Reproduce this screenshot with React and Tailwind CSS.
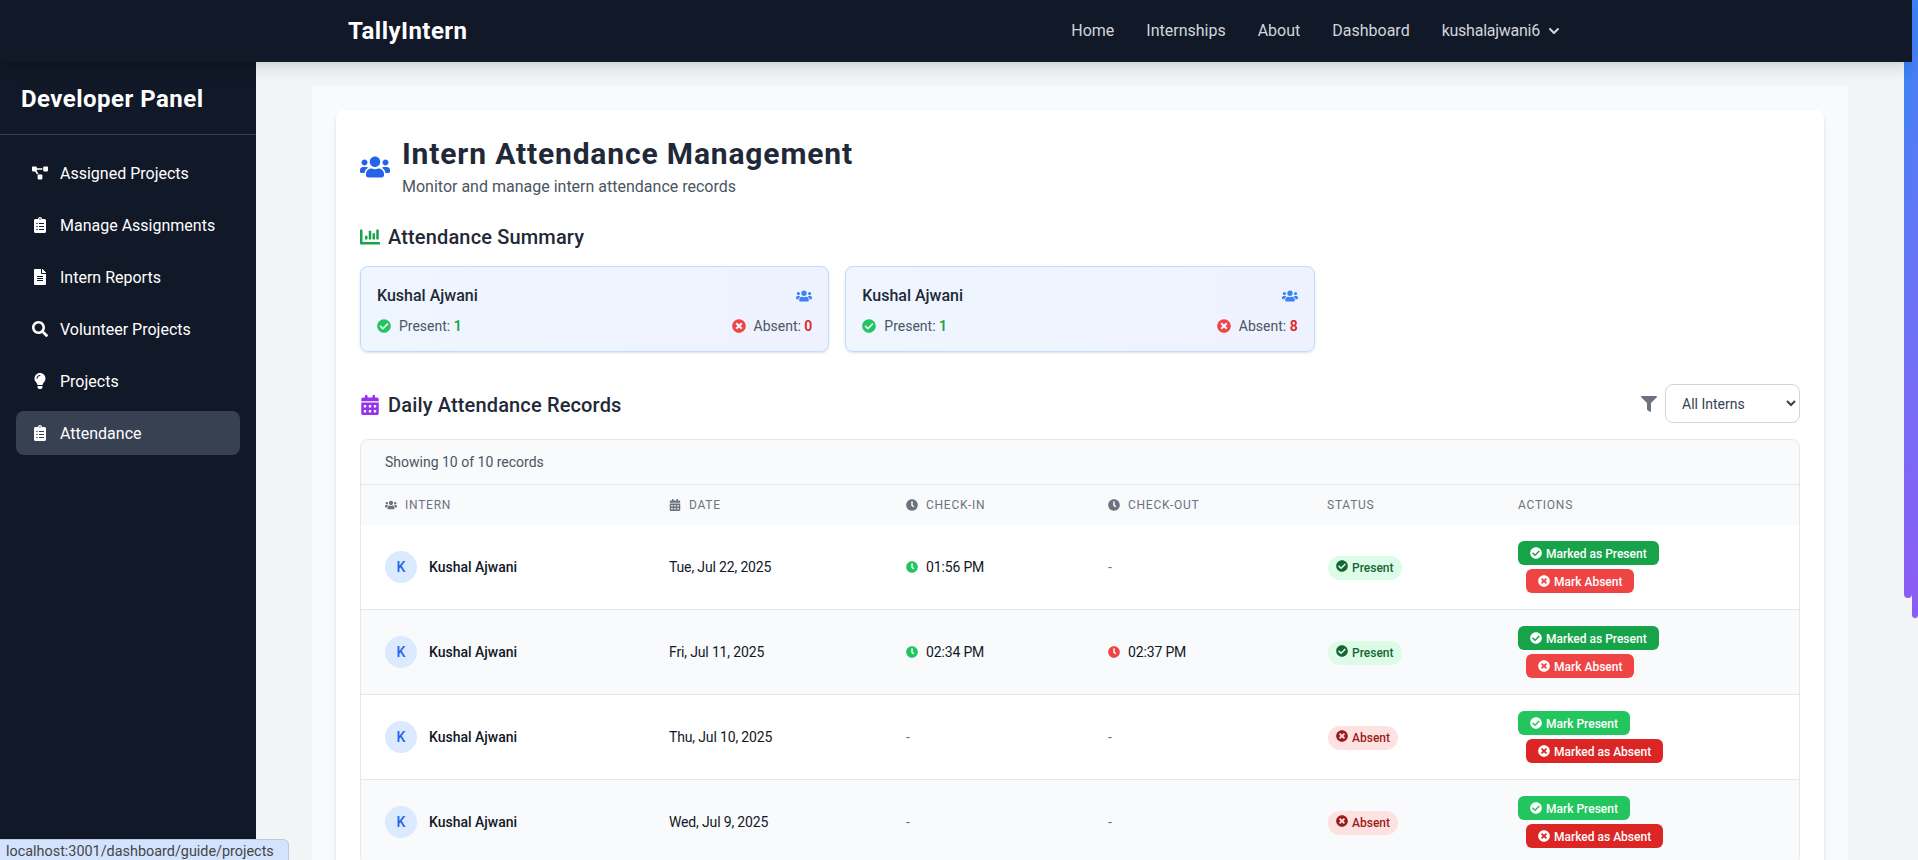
import { FaProjectDiagram, FaClipboardList, FaFileAlt, FaSearch, FaLightbulb, FaUsers, FaChartBar, FaCalendarAlt, FaFilter, FaClock, FaCheckCircle, FaTimesCircle } from 'react-icons/fa';
import { HiChevronDown } from 'react-icons/hi';

const sideLinks = [
  { label: 'Assigned Projects', icon: FaProjectDiagram },
  { label: 'Manage Assignments', icon: FaClipboardList },
  { label: 'Intern Reports', icon: FaFileAlt },
  { label: 'Volunteer Projects', icon: FaSearch },
  { label: 'Projects', icon: FaLightbulb },
  { label: 'Attendance', icon: FaClipboardList, active: true },
];

const records = [
  { date: 'Tue, Jul 22, 2025', checkIn: '01:56 PM', checkOut: null, present: true },
  { date: 'Fri, Jul 11, 2025', checkIn: '02:34 PM', checkOut: '02:37 PM', present: true },
  { date: 'Thu, Jul 10, 2025', checkIn: null, checkOut: null, present: false },
  { date: 'Wed, Jul 9, 2025', checkIn: null, checkOut: null, present: false },
];

function SummaryCard({ present, absent }) {
  return (
    <div className="h-[86px] rounded-lg border border-[#bfdbfe] bg-gradient-to-r from-[#eff6ff] to-[#eef2ff] p-4 shadow-sm">
      <div className="flex items-center justify-between h-6 mt-px">
        <span className="font-medium text-[#1f2937]">Kushal Ajwani</span>
        <FaUsers className="text-[#3b82f6] text-base" />
      </div>
      <div className="flex items-center justify-between mt-2 text-sm">
        <div className="flex items-center">
          <FaCheckCircle className="text-[#22c55e] text-sm mr-2" />
          <span className="text-[#4b5563]">Present: <span className="font-semibold text-[#16a34a]">{present}</span></span>
        </div>
        <div className="flex items-center">
          <FaTimesCircle className="text-[#ef4444] text-sm mr-2" />
          <span className="text-[#4b5563]">Absent: <span className="font-semibold text-[#dc2626]">{absent}</span></span>
        </div>
      </div>
    </div>
  );
}

function TimeCell({ value, color }) {
  if (!value) return <span className="text-[#6b7280]">-</span>;
  return (
    <div className="flex items-center">
      <FaClock className={`${color} text-xs mr-2`} />
      <span className="text-[#111827] tracking-[-0.15px]">{value}</span>
    </div>
  );
}

function ActionButton({ icon: Icon, color, ml, children }) {
  return (
    <span className={`inline-flex items-center h-6 px-3 rounded-md text-xs font-medium text-white ${color} ${ml ? 'ml-2' : ''}`}>
      <Icon className="text-xs mr-1" />
      <span className="mt-px">{children}</span>
    </span>
  );
}

function HeadCell({ icon: Icon, width, children }) {
  return (
    <th className={`${width} px-6 text-left text-xs font-normal text-[#6b7280] uppercase tracking-[0.75px]`}>
      <div className="flex items-center">
        {Icon && <Icon className="mr-2" />}
        {children}
      </div>
    </th>
  );
}

export default function App() {
  return (
    <div className="relative h-screen overflow-hidden flex flex-col bg-[#f3f4f6] font-['Roboto','Noto_Sans',sans-serif]">
      <nav className="relative z-10 h-[62px] shrink-0 bg-[#111827] shadow-lg mr-[6px]">
        <div className="max-w-7xl mx-auto h-full px-8 flex items-center justify-between">
          <span className="text-2xl font-bold text-white tracking-[0.45px]">TallyIntern</span>
          <div className="flex items-center gap-8 text-[#d1d5db]">
            <span>Home</span>
            <span>Internships</span>
            <span>About</span>
            <span>Dashboard</span>
            <span className="flex items-center gap-1 tracking-[-0.25px]">kushalajwani6 <HiChevronDown className="w-5 h-5" /></span>
          </div>
        </div>
      </nav>

      <div className="flex flex-1 min-h-0">
        <aside className="w-64 shrink-0 bg-[#111827] text-white">
          <div className="h-[73px] flex items-center px-[21px] border-b border-[#374151]">
            <h2 className="text-2xl font-bold tracking-[0.47px] mt-[2px]">Developer Panel</h2>
          </div>
          <div className="px-4 pt-4 flex flex-col gap-2">
            {sideLinks.map((link) => (
              <div key={link.label} className={`h-11 px-4 flex items-center rounded-lg ${link.active ? 'bg-[#374151]' : ''}`}>
                <link.icon className="w-4 h-4 mr-3" />
                <span className="mt-[2px]">{link.label}</span>
              </div>
            ))}
          </div>
        </aside>

        <main className="flex-1 min-w-0 overflow-hidden mr-[14px]">
          <div className="max-w-screen-2xl mx-auto mt-6 p-6 bg-[#f9fafb]">
            <div className="bg-white rounded-lg shadow-md p-6">
              <div className="flex items-center">
                <FaUsers className="text-[#2563eb] text-3xl mr-3" />
                <div>
                  <h1 className="mt-[2px] text-3xl font-bold text-[#1f2937] tracking-[0.85px]">Intern Attendance Management</h1>
                  <p className="mt-[3px] text-[#4b5563]">Monitor and manage intern attendance records</p>
                </div>
              </div>

              <h2 className="mt-6 flex items-center text-xl font-medium text-[#1f2937] tracking-[0.15px]">
                <FaChartBar className="text-[#16a34a] mr-2" />
                Attendance Summary
              </h2>
              <div className="grid grid-cols-3 gap-4 mt-[15px]">
                <SummaryCard present={1} absent={0} />
                <SummaryCard present={1} absent={8} />
              </div>

              <div className="mt-8 flex items-center justify-between">
                <h2 className="mt-[2px] flex items-center text-xl font-medium text-[#1f2937] tracking-[0.15px]">
                  <FaCalendarAlt className="text-[#9333ea] mr-2" />
                  Daily Attendance Records
                </h2>
                <div className="flex items-center">
                  <FaFilter className="text-[#6b7280] mr-2" />
                  <select className="w-[135px] h-[39px] pl-3 pr-2 text-sm text-[#374151] bg-white border border-[#d1d5db] rounded-lg">
                    <option>All Interns</option>
                  </select>
                </div>
              </div>

              <div className="mt-4 rounded-lg border border-[#e5e7eb] overflow-hidden">
                <div className="h-[45px] px-6 flex items-center bg-[#f9fafb] border-b border-[#e5e7eb] text-sm text-[#4b5563]">
                  Showing 10 of 10 records
                </div>
                <table className="w-full table-fixed text-sm">
                  <thead className="bg-[#f9fafb]">
                    <tr className="h-10">
                      <HeadCell icon={FaUsers} width="w-[284px]">Intern</HeadCell>
                      <HeadCell icon={FaCalendarAlt} width="w-[237px]">Date</HeadCell>
                      <HeadCell icon={FaClock} width="w-[202px]">Check-in</HeadCell>
                      <HeadCell icon={FaClock} width="w-[219px]">Check-out</HeadCell>
                      <HeadCell width="w-[191px]">Status</HeadCell>
                      <HeadCell>Actions</HeadCell>
                    </tr>
                  </thead>
                  <tbody className="divide-y divide-[#e5e7eb]">
                    {records.map((r, i) => (
                      <tr key={r.date} className={i % 2 ? 'bg-[#f9fafb]' : 'bg-white'}>
                        <td className="px-6 py-4">
                          <div className="flex items-center">
                            <div className="w-8 h-8 rounded-full bg-[#dbeafe] flex items-center justify-center font-medium text-[#2563eb]">K</div>
                            <span className="ml-3 font-medium text-[#111827]">Kushal Ajwani</span>
                          </div>
                        </td>
                        <td className="px-6 py-4 text-[#111827] tracking-[-0.15px]">{r.date}</td>
                        <td className="px-6 py-4"><TimeCell value={r.checkIn} color="text-[#22c55e]" /></td>
                        <td className="px-6 py-4"><TimeCell value={r.checkOut} color="text-[#ef4444]" /></td>
                        <td className="px-6 py-4">
                          <div className="flex mt-[2px] ml-px">
                            {r.present ? (
                              <span className="inline-flex items-center h-6 px-2 rounded-full text-xs font-medium bg-[#dcfce7] text-[#166534]">
                                <FaCheckCircle className="mr-1 -mt-1" />Present
                              </span>
                            ) : (
                              <span className="inline-flex items-center h-6 px-2 rounded-full text-xs font-medium bg-[#fee2e2] text-[#991b1b]">
                                <FaTimesCircle className="mr-1 -mt-1" />Absent
                              </span>
                            )}
                          </div>
                        </td>
                        <td className="px-6 py-4">
                          <div className="flex flex-col items-start gap-1">
                            {r.present ? (
                              <ActionButton icon={FaCheckCircle} color="bg-[#16a34a]">Marked as Present</ActionButton>
                            ) : (
                              <ActionButton icon={FaCheckCircle} color="bg-[#22c55e]">Mark Present</ActionButton>
                            )}
                            {r.present ? (
                              <ActionButton icon={FaTimesCircle} color="bg-[#ef4444]" ml>Mark Absent</ActionButton>
                            ) : (
                              <ActionButton icon={FaTimesCircle} color="bg-[#dc2626]" ml>Marked as Absent</ActionButton>
                            )}
                          </div>
                        </td>
                      </tr>
                    ))}
                  </tbody>
                </table>
              </div>
            </div>
          </div>
        </main>
      </div>

      {/* inner and page scrollbar thumbs */}
      <div className="absolute top-[62px] right-[6px] w-2 h-[536px] rounded-b-md bg-gradient-to-b from-[#3b82f6] to-[#8b5cf6]" />
      <div className="absolute top-0 right-0 w-[6px] h-[618px] rounded-b-md bg-gradient-to-b from-[#3b82f6] to-[#8b5cf6]" />

      {/* browser link status bubble */}
      <div className="absolute left-0 bottom-0 h-[21px] w-[289px] pl-[6px] pt-[5px] flex items-center overflow-hidden bg-[#d3e3fd] border-t border-r border-[#bcc8dc] rounded-tr-md text-[14.4px] leading-none text-[#444746] whitespace-nowrap">
        localhost:3001/dashboard/guide/projects
      </div>
    </div>
  );
}
